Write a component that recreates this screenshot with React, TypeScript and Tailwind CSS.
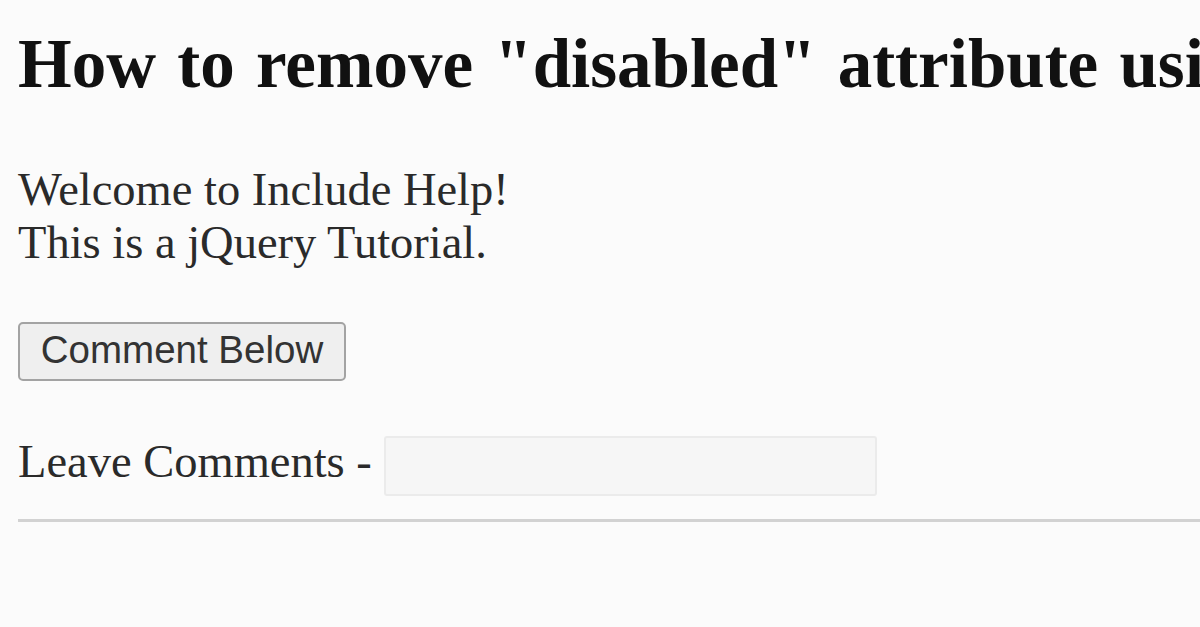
export default function App() {
    return (
        <div className="w-[1200px] h-[627px] overflow-hidden bg-[#fbfbfb] pl-[18px] font-['Liberation_Serif',serif] text-[#1a1a1a]">
            <h2 className="pt-[30px] text-[69px] leading-[69px] font-bold whitespace-nowrap overflow-hidden text-[#111] [word-spacing:4px]">
                How to remove "disabled" attribute using jQuery?
            </h2>

            <p className="mt-[64px] text-[46.5px] leading-[53px] text-[#2a2a2a]">
                Welcome to Include Help!
                <br />
                This is a jQuery Tutorial.
            </p>

            <button className="mt-[53px] block w-[328px] h-[59px] rounded-[5px] border-2 border-[#a3a3a3] bg-[#efefef] font-['Liberation_Sans',sans-serif] text-[38.5px] leading-none text-[#333] pb-[2px]">
                Comment Below
            </button>

            <div className="mt-[55px] flex items-center gap-[12px]">
                <span className="text-[46.5px] leading-[46px] pb-[9px] text-[#2a2a2a]">Leave Comments -</span>
                <input
                    disabled
                    className="w-[493px] h-[60px] rounded-[3px] border-2 border-[#ebebeb] bg-[#f6f6f6]"
                />
            </div>

            <hr className="mt-[23px] border-0 h-[3px] bg-[#d2d2d2]" />
        </div>
    );
}
